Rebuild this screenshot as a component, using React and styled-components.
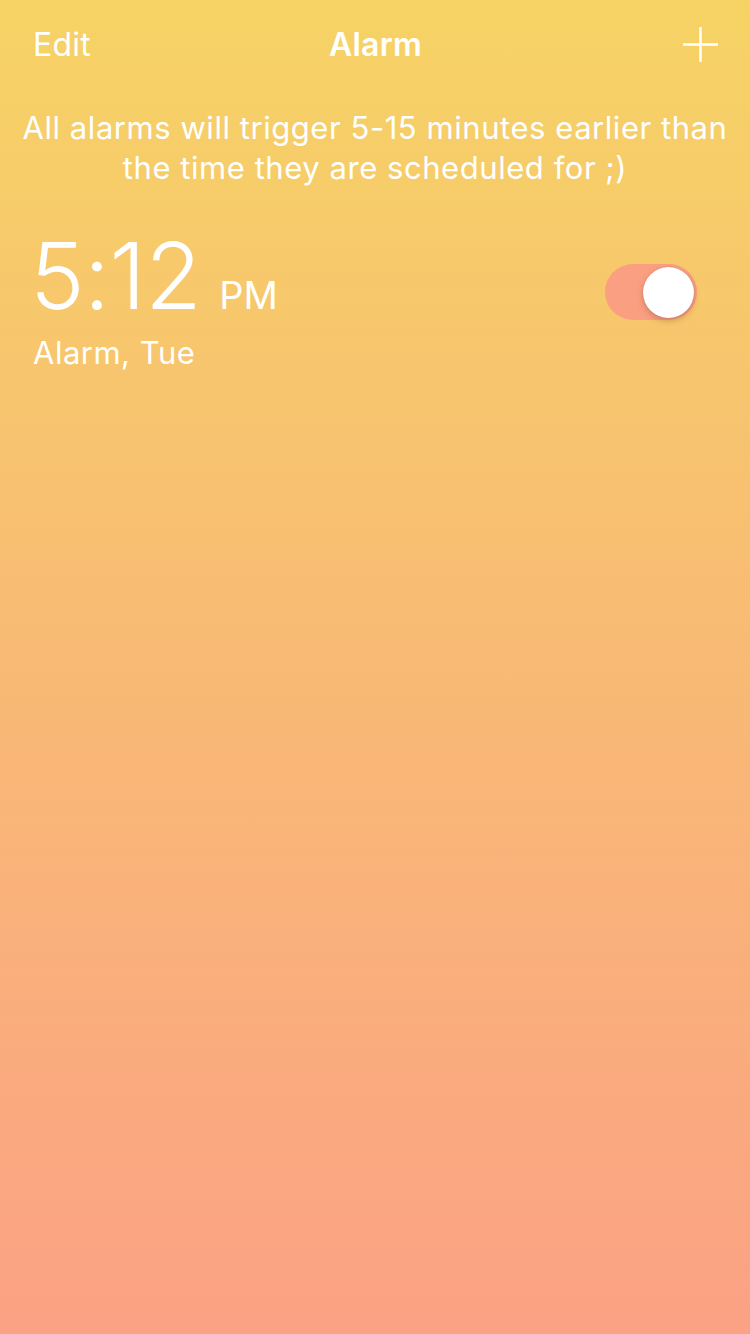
import React from 'react';
import styled, { createGlobalStyle } from 'styled-components';

const GlobalStyle = createGlobalStyle`
    html, body {
        margin: 0;
        padding: 0;
    }
    body {
        font-family: Inter, "Open Sans", sans-serif;
        -webkit-font-smoothing: antialiased;
    }
`;

const Screen = styled.div`
    width: 750px;
    height: 1334px;
    box-sizing: border-box;
    background: linear-gradient(180deg, #f6d365 0%, #fba184 100%);
    color: #fff;
    overflow: hidden;
`;

const NavBar = styled.div`
    display: grid;
    grid-template-columns: 1fr auto 1fr;
    align-items: center;
    height: 88px;
    padding: 0 32px 0 33px;
`;

const NavButton = styled.div`
    font-size: 32px;
    font-weight: 400;
    letter-spacing: 0.2px;
    justify-self: ${p => (p.$right ? 'end' : 'start')};
`;

const Title = styled.div`
    font-size: 32px;
    font-weight: 600;
    letter-spacing: 0.2px;
`;

const PlusIcon = styled.svg`
    display: block;
    width: 35px;
    height: 35px;
`;

const Notice = styled.p`
    margin: 20px 0 0;
    padding: 0 10px;
    text-align: center;
    font-size: 31px;
    line-height: 40px;
    letter-spacing: 0.55px;
`;

const AlarmRow = styled.div`
    display: flex;
    align-items: flex-start;
    justify-content: space-between;
    padding: 40px 53px 0 33px;
`;

const AlarmInfo = styled.div`
    display: flex;
    flex-direction: column;
`;

const Time = styled.div`
    display: flex;
    align-items: baseline;
    gap: 18px;
    line-height: 96px;
`;

const Digits = styled.span`
    font-size: 92px;
    font-weight: 300;
    letter-spacing: -0.5px;
    margin-left: -3px;
`;

const Meridiem = styled.span`
    font-size: 38px;
    font-weight: 400;
`;

const Label = styled.div`
    font-size: 31px;
    font-weight: 400;
    letter-spacing: 0.5px;
    margin-top: -9px;
`;

const Switch = styled.div`
    position: relative;
    width: 92px;
    height: 56px;
    border-radius: 28px;
    background: #fa9f82;
    margin-top: 36px;
`;

const Knob = styled.div`
    position: absolute;
    top: 3px;
    right: 3px;
    width: 51px;
    height: 51px;
    border-radius: 50%;
    background: #fff;
    box-shadow: 0 3px 6px rgba(140, 70, 40, 0.35), 0 0 1px rgba(0, 0, 0, 0.25);
`;

function App() {
    return (
        <Screen>
            <GlobalStyle />
            <NavBar>
                <NavButton>Edit</NavButton>
                <Title>Alarm</Title>
                <NavButton $right>
                    <PlusIcon viewBox="0 0 35 35">
                        <path d="M17.5 0v35M0 17.5h35" stroke="#fff" strokeWidth="2.4" fill="none" />
                    </PlusIcon>
                </NavButton>
            </NavBar>
            <Notice>All alarms will trigger 5-15 minutes earlier than the time they are scheduled for ;)</Notice>
            <AlarmRow>
                <AlarmInfo>
                    <Time>
                        <Digits>5:12</Digits>
                        <Meridiem>PM</Meridiem>
                    </Time>
                    <Label>Alarm, Tue</Label>
                </AlarmInfo>
                <Switch>
                    <Knob />
                </Switch>
            </AlarmRow>
        </Screen>
    );
}

export default App;
